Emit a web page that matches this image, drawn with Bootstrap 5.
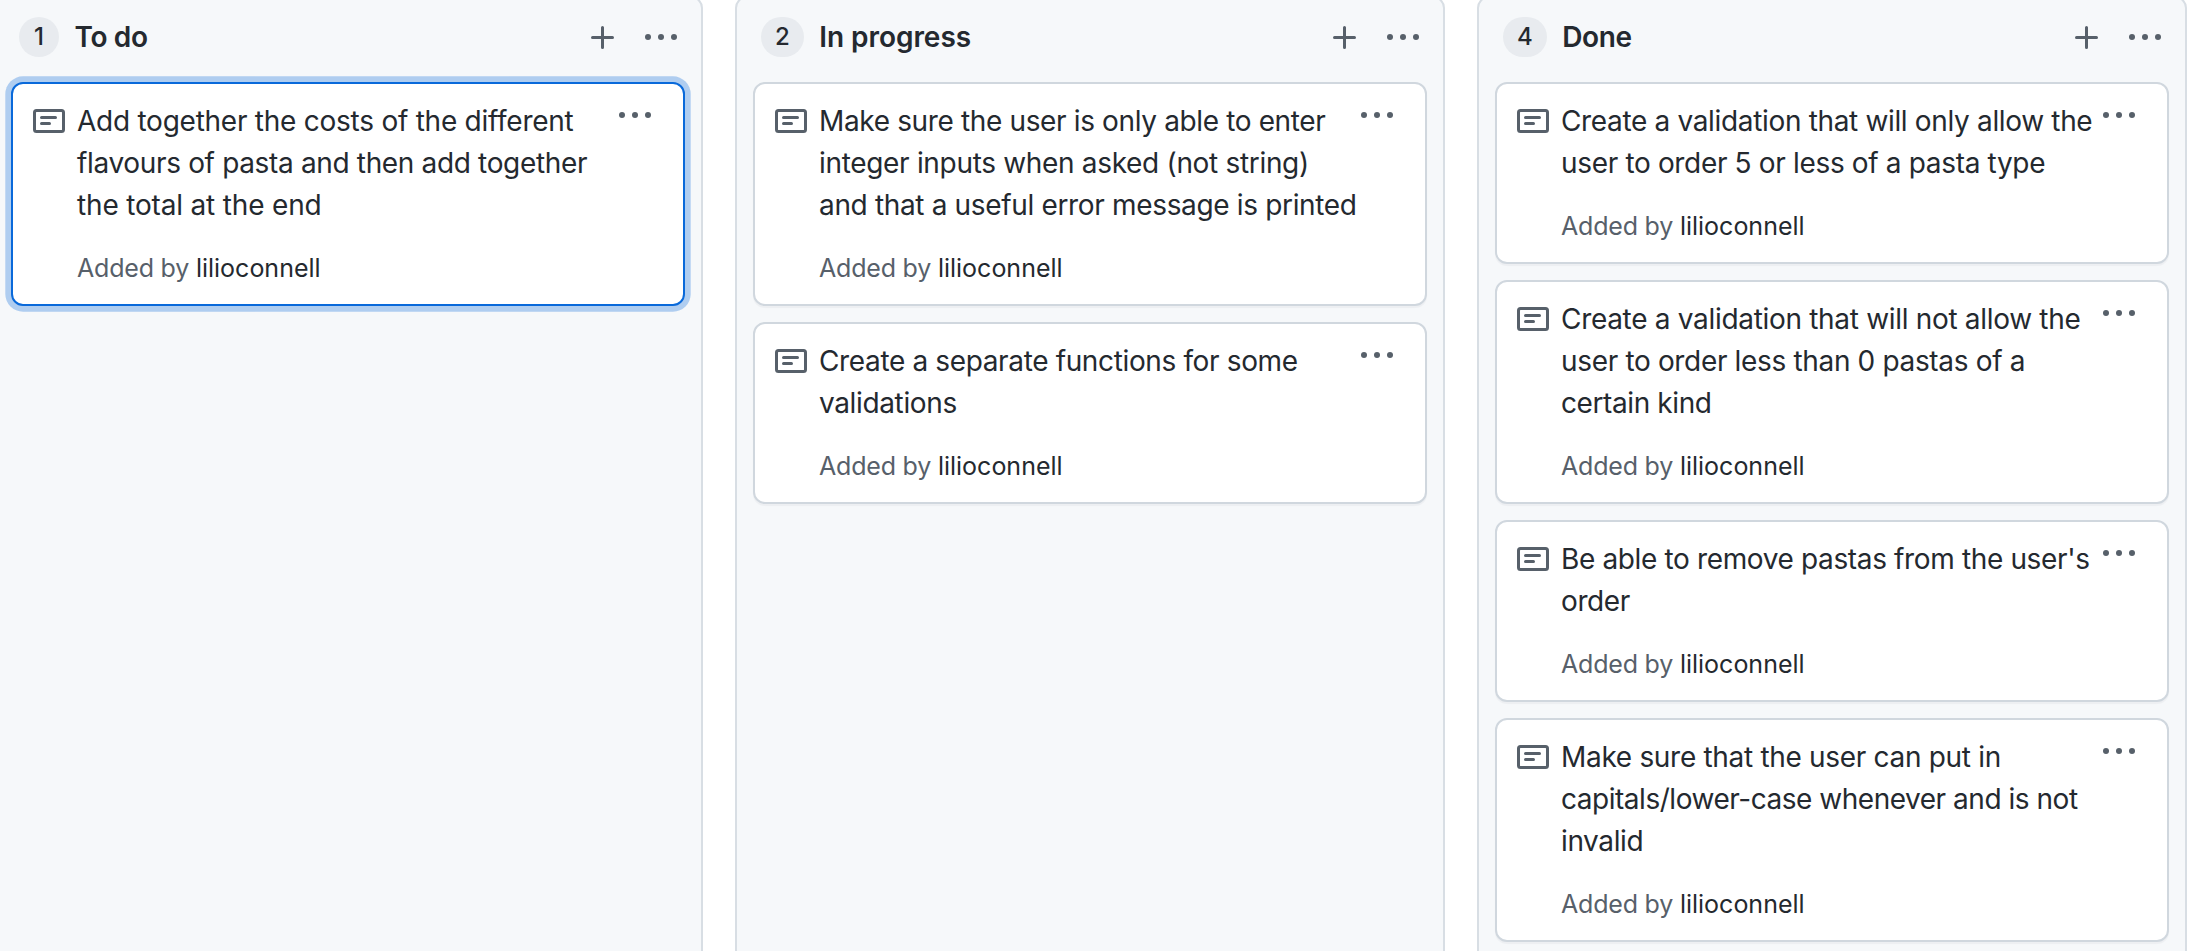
<!DOCTYPE html>
<html lang="en">
<head>
<meta charset="utf-8">
<meta name="viewport" content="width=device-width, initial-scale=1">
<title>Project board</title>
<link href="https://cdn.jsdelivr.net/npm/bootstrap@5.3.0/dist/css/bootstrap.min.css" rel="stylesheet">
<style>
  body { font-family: Inter, "Liberation Sans", sans-serif; color: #24292f; background: #fff; overflow: hidden; }
  .board { gap: 32px; height: 960px; margin: -4px 0 0 -7px; }
  .board-col { width: 710px; background: #f6f8fa; border: 2px solid #d8dee4; border-radius: 12px 12px 0 0; padding: 0 16px; }
  .col-head { height: 84px; padding: 0 7px 6px 8px; }
  .counter { height: 40px; min-width: 40px; padding: 0 14px; background: #e8ebef; font-size: 24px; font-weight: 500; line-height: 40px; }
  .col-title { font-size: 28px; font-weight: 600; line-height: 42px; margin: 0 0 0 15.5px; letter-spacing: -.35px; }
  .tool { color: #57606a; background: none; border: 0; padding: 0; line-height: 0; }
  .col-menu { margin-left: 30px; position: relative; }
  .note { border: 2px solid #d0d7de; border-radius: 12px; padding: 16px 0 16px 20px; margin-bottom: 16px; box-shadow: 0 2px 1px rgba(31,35,40,.04); color: inherit; }
  .note.selected { border-color: #0969da; box-shadow: 0 0 0 5.7px rgba(9,105,218,.3); }
  .note-icon { color: #57606a; width: 32px; height: 24px; margin: 9px 12px 0 0; }
  .note-text { font-size: 28px; line-height: 42px; letter-spacing: -.34px; margin: 0; }
  .note-by { font-size: 25px; line-height: 40px; letter-spacing: -.2px; margin: 22px 0 0; color: #57606a; }
  .note-by a { color: #24292f; letter-spacing: 0; }
  .note-menu { top: 27px; right: 31px; }
</style>
</head>
<body>
<svg class="d-none">
  <symbol id="note" viewBox="0 0 32 24"><g fill="none" stroke="currentColor" stroke-width="3"><rect x="1.5" y="1.5" width="29" height="21" rx="2"/><path stroke-linecap="round" d="M8.5 8.5h14M8.5 14.5h8"/></g></symbol>
  <symbol id="dots" viewBox="0 0 34 8"><g fill="currentColor"><circle cx="4" cy="4" r="3"/><circle cx="17" cy="4" r="3"/><circle cx="30" cy="4" r="3"/></g></symbol>
  <symbol id="plus" viewBox="0 0 23 23"><path stroke="currentColor" stroke-width="3" stroke-linecap="round" d="M11.5 1.5v20M1.5 11.5h20"/></symbol>
</svg>
<main class="board d-flex">
</main>
<script src="https://cdn.jsdelivr.net/npm/bootstrap@5.3.0/dist/js/bootstrap.bundle.min.js"></script>
<script>
  // A line is a string, or [string, letter-spacing in px].
  const columns = [
    { title: 'To do', cards: [[['Add together the costs of the different', -.25], 'flavours of pasta and then add together', ['the total at the end', -.17]]], selected: 0 },
    { title: ['In progress', -.05], cards: [
      [['Make sure the user is only able to enter', -.36], ['integer inputs when asked (not string)', -.32], 'and that a useful error message is printed'],
      [['Create a separate functions for some', -.36], ['validations', -.36]]] },
    { title: 'Done', cards: [
      ['Create a validation that will only allow the', 'user to order 5 or less of a pasta type'],
      [['Create a validation that will not allow the', -.31], 'user to order less than 0 pastas of a', ['certain kind', -.4]],
      [["Be able to remove pastas from the user's", -.36], ['order', -.4]],
      [['Make sure that the user can put in', -.31], ['capitals/lower-case whenever and is not', -.47], ['invalid', -.4]]] }
  ];
  const line = l => Array.isArray(l) ? `<span style="letter-spacing:${l[1]}px">${l[0]}</span>` : `<span>${l}</span>`;
  const icon = (id, w, h) => `<svg width="${w}" height="${h}"><use href="#${id}"/></svg>`;
  const card = (lines, selected) => `
    <article class="card note flex-row align-items-start${selected ? ' selected' : ''}">
      <svg class="note-icon flex-shrink-0"><use href="#note"/></svg>
      <div class="text-nowrap">
        <p class="note-text">${lines.map(line).join('<br>')}</p>
        <p class="note-by">Added by <a class="text-decoration-none">lilioconnell</a></p>
      </div>
      <button class="tool note-menu position-absolute" aria-label="Card menu">${icon('dots', 34, 8)}</button>
    </article>`;
  document.querySelector('.board').innerHTML = columns.map(c => `
    <section class="board-col flex-shrink-0">
      <header class="col-head d-flex align-items-center">
        <span class="counter rounded-pill text-center">${c.cards.length}</span>
        <h2 class="col-title me-auto">${line(c.title)}</h2>
        <button class="tool" aria-label="Add card">${icon('plus', 23, 23)}</button>
        <button class="tool col-menu" aria-label="Column menu">${icon('dots', 34, 8)}</button>
      </header>
      ${c.cards.map((l, i) => card(l, c.selected === i)).join('')}
    </section>`).join('');
</script>
</body>
</html>
